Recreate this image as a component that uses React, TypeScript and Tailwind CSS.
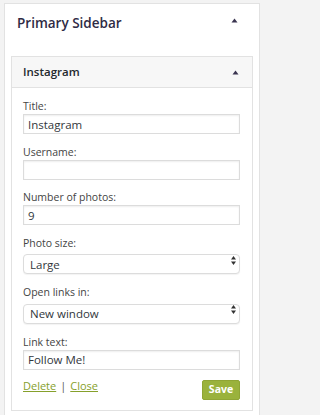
import React from "react";

const font = { fontFamily: '"Open Sans", "Noto Sans", sans-serif' };

function Caret() {
  return (
    <svg width="7" height="5" viewBox="0 0 7 5" className="fill-[#3a3450]">
      <path d="M3.5 0.5 L6.5 4.5 L0.5 4.5 Z" />
    </svg>
  );
}

function Field({ label, children }: { label: string; children: React.ReactNode }) {
  return (
    <div className="flex flex-col">
      <label className="h-[16px] text-[10.5px] leading-[16px] text-[#444]">{label}</label>
      {children}
    </div>
  );
}

function TextInput({ value }: { value: string }) {
  return (
    <input
      readOnly
      value={value}
      className="h-[20px] w-full border border-[#dcdcdc] bg-white px-[4px] text-[11.5px] text-[#32373c] shadow-[inset_0_1px_2px_rgba(0,0,0,0.07)] outline-none"
    />
  );
}

function Select({ value, options }: { value: string; options: string[] }) {
  return (
    <div className="relative">
      <select
        defaultValue={value}
        className="h-[20px] w-full appearance-none rounded-[4px] border border-[#dcdcdc] bg-white pl-[6px] text-[11.5px] text-[#32373c] shadow-[0_1px_1px_rgba(0,0,0,0.05)] outline-none"
      >
        {options.map((o) => (
          <option key={o}>{o}</option>
        ))}
      </select>
      <svg
        width="5"
        height="9"
        viewBox="0 0 5 9"
        className="pointer-events-none absolute right-[4px] top-[5px] fill-[#333]"
      >
        <path d="M2.5 0 L5 3.5 L0 3.5 Z" />
        <path d="M0 5.5 L5 5.5 L2.5 9 Z" />
      </svg>
    </div>
  );
}

export default function App() {
  return (
    <div className="min-h-screen w-full bg-[#f3f3f3] pl-[4px] pt-[3px]" style={font}>
      <div className="w-[256px] border border-[#e2e2e2] bg-white px-[6px] pb-[8px]">
        <div className="flex h-[38px] items-center justify-between pl-[6px] pr-[15px]">
          <h2 className="text-[13.5px] font-semibold text-[#2f2b45]">Primary Sidebar</h2>
          <span className="-mt-[5px]">
            <Caret />
          </span>
        </div>
        <div className="mt-[14px] border border-[#e2e2e2]">
          <div className="flex h-[31px] items-center justify-between border-b border-[#e2e2e2] bg-[#f7f7f7] pl-[11px] pr-[13px]">
            <h3 className="text-[11.5px] font-semibold text-[#23282d]">Instagram</h3>
            <Caret />
          </div>
          <div className="flex flex-col gap-[9.5px] pb-[10px] pl-[11px] pr-[12px] pt-[10px]">
            <Field label="Title:">
              <TextInput value="Instagram" />
            </Field>
            <Field label="Username:">
              <TextInput value="" />
            </Field>
            <Field label="Number of photos:">
              <TextInput value="9" />
            </Field>
            <Field label="Photo size:">
              <Select value="Large" options={["Thumbnail", "Small", "Large", "Original"]} />
            </Field>
            <Field label="Open links in:">
              <Select value="New window" options={["Current window", "New window"]} />
            </Field>
            <Field label="Link text:">
              <TextInput value="Follow Me!" />
            </Field>
            <div className="flex items-start justify-between pt-[0.5px]">
              <div className="text-[11px] leading-[12px] text-[#555]">
                <a href="#" className="text-[#86a02b] underline">Delete</a>
                <span className="mx-[4px]">|</span>
                <a href="#" className="text-[#86a02b] underline">Close</a>
              </div>
              <button className="h-[20px] w-[38px] rounded-[2px] border border-[#8fa535] bg-[#9ab23c] text-[10.5px] font-bold text-white">
                Save
              </button>
            </div>
          </div>
        </div>
      </div>
    </div>
  );
}
